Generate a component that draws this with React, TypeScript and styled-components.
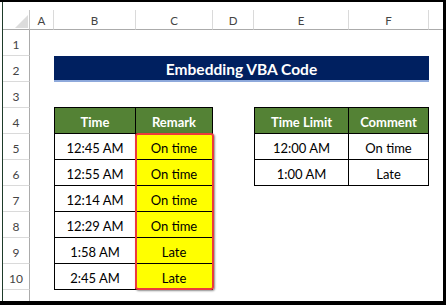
import React from "react";
import styled, { createGlobalStyle, css } from "styled-components";

const Global = createGlobalStyle`
  html, body { margin: 0; padding: 0; background: #fff; }
  * { box-sizing: border-box; }
`;

const Frame = styled.div`
  position: relative;
  width: 446px;
  height: 305px;
  background: #fff;
  border-top: 2px solid #000;
  border-right: 3px solid #000;
  border-bottom: 4px solid #000;
  padding-left: 2px;
  overflow: hidden;
  font-family: Lato, "Open Sans", sans-serif;
`;

const Inner = styled.div`
  position: relative;
  height: 100%;
  border-left: 1px solid #1e3b2a;
  padding-top: 8px;
`;

const Sheet = styled.div`
  position: relative;
  display: grid;
  grid-template-columns: 27px 24px 82px 77px 41px 95px 80px 1fr;
  grid-template-rows: 20px;
  grid-auto-rows: 26px;
`;

const Corner = styled.div`
  border-right: 1px solid #c6c6c6;
  border-bottom: 1px solid #ababab;
  display: flex;
  align-items: flex-end;
  justify-content: flex-end;
  padding: 0 1px 1px 0;
`;

const ColHead = styled.div<{ $last?: boolean }>`
  border-bottom: 1px solid #ababab;
  border-right: ${(p) => (p.$last ? "none" : "1px solid #dadada")};
  display: flex;
  align-items: center;
  justify-content: center;
  font-size: 11.5px;
  color: #444;
  padding-top: 1px;
`;

const RowHead = styled.div`
  border-right: 1px solid #ababab;
  border-bottom: 1px solid #dadada;
  display: flex;
  align-items: flex-end;
  justify-content: center;
  padding-bottom: 3px;
  font-size: 12px;
  color: #444;
`;

const Empty = styled.div``;

const Banner = styled.div`
  grid-column: span 5;
  background: #002060;
  border-bottom: 2px solid #8ea9db;
  color: #fff;
  font-weight: 700;
  font-size: 15.5px;
  display: flex;
  align-items: center;
  justify-content: center;
  padding-top: 1px;
`;

type Kind = "head" | "body" | "yellow";

const Cell = styled.div<{ $kind: Kind; $first?: boolean }>`
  display: flex;
  align-items: center;
  justify-content: center;
  font-size: 13px;
  color: #000;
  border-right: 1px solid #000;
  border-bottom: 1px solid #000;
  ${(p) => p.$first && css`border-left: 1px solid #000;`}
  ${(p) =>
    p.$kind === "head" &&
    css`
      background: #548235;
      color: #fff;
      font-weight: 700;
      box-shadow: 0 -1px 0 #000;
    `}
  ${(p) => p.$kind === "yellow" && css`background: #ffff00;`}
  padding-top: 2px;
`;

const Highlight = styled.div`
  position: absolute;
  left: 132px;
  top: 131px;
  width: 79px;
  height: 157px;
  border: 2.5px solid #ec3b3b;
  border-radius: 3px;
  box-shadow: 1px 1px 2px rgba(0, 0, 0, 0.45);
  pointer-events: none;
`;

const cols = ["A", "B", "C", "D", "E", "F", ""];

const t1: [string, string][] = [
  ["12:45 AM", "On time"],
  ["12:55 AM", "On time"],
  ["12:14 AM", "On time"],
  ["12:29 AM", "On time"],
  ["1:58 AM", "Late"],
  ["2:45 AM", "Late"],
];

const t2: [string, string][] = [
  ["12:00 AM", "On time"],
  ["1:00 AM", "Late"],
];

function Row({ n, children }: { n: number; children?: React.ReactNode }) {
  return (
    <>
      <RowHead>{n}</RowHead>
      {children}
    </>
  );
}

export default function App() {
  const rows: React.ReactNode[] = [];
  rows.push(
    <Row key={1} n={1}>
      {cols.map((_, i) => (
        <Empty key={i} />
      ))}
    </Row>
  );
  rows.push(
    <Row key={2} n={2}>
      <Empty />
      <Banner>Embedding VBA Code</Banner>
      <Empty />
    </Row>
  );
  rows.push(
    <Row key={3} n={3}>
      {cols.map((_, i) => (
        <Empty key={i} />
      ))}
    </Row>
  );
  rows.push(
    <Row key={4} n={4}>
      <Empty />
      <Cell $kind="head" $first>Time</Cell>
      <Cell $kind="head">Remark</Cell>
      <Empty />
      <Cell $kind="head" $first>Time Limit</Cell>
      <Cell $kind="head">Comment</Cell>
      <Empty />
    </Row>
  );
  t1.forEach(([time, remark], i) => {
    const lim = t2[i];
    rows.push(
      <Row key={5 + i} n={5 + i}>
        <Empty />
        <Cell $kind="body" $first>{time}</Cell>
        <Cell $kind="yellow">{remark}</Cell>
        <Empty />
        {lim ? (
          <>
            <Cell $kind="body" $first>{lim[0]}</Cell>
            <Cell $kind="body">{lim[1]}</Cell>
          </>
        ) : (
          <>
            <Empty />
            <Empty />
          </>
        )}
        <Empty />
      </Row>
    );
  });
  rows.push(
    <Row key={11} n={11}>
      {cols.map((_, i) => (
        <Empty key={i} />
      ))}
    </Row>
  );

  return (
    <>
      <Global />
      <Frame>
        <Inner>
          <Sheet>
            <Corner>
              <svg width="13" height="13" viewBox="0 0 13 13">
                <polygon points="13,0 13,13 0,13" fill="#dcdcdc" />
              </svg>
            </Corner>
            {cols.map((c, i) => (
              <ColHead key={i} $last={i === cols.length - 1}>
                {c}
              </ColHead>
            ))}
            {rows}
          </Sheet>
          <Highlight />
        </Inner>
      </Frame>
    </>
  );
}
